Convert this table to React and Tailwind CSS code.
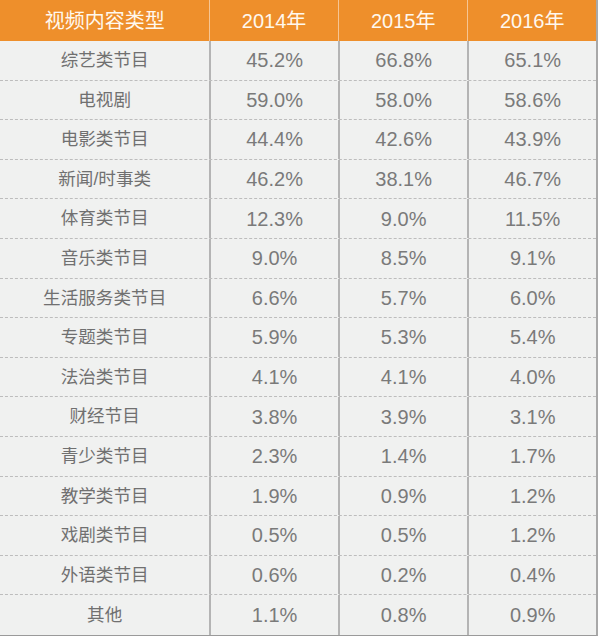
import React from 'react'

const ROWS = [
  ['综艺类节目', '45.2%', '66.8%', '65.1%'],
  ['电视剧', '59.0%', '58.0%', '58.6%'],
  ['电影类节目', '44.4%', '42.6%', '43.9%'],
  ['新闻/时事类', '46.2%', '38.1%', '46.7%'],
  ['体育类节目', '12.3%', '9.0%', '11.5%'],
  ['音乐类节目', '9.0%', '8.5%', '9.1%'],
  ['生活服务类节目', '6.6%', '5.7%', '6.0%'],
  ['专题类节目', '5.9%', '5.3%', '5.4%'],
  ['法治类节目', '4.1%', '4.1%', '4.0%'],
  ['财经节目', '3.8%', '3.9%', '3.1%'],
  ['青少类节目', '2.3%', '1.4%', '1.7%'],
  ['教学类节目', '1.9%', '0.9%', '1.2%'],
  ['戏剧类节目', '0.5%', '0.5%', '1.2%'],
  ['外语类节目', '0.6%', '0.2%', '0.4%'],
  ['其他', '1.1%', '0.8%', '0.9%'],
]

const HEAD = ['视频内容类型', '2014年', '2015年', '2016年']
const WIDTHS = ['w-[210px]', 'w-[129px]', 'w-[130px]', 'w-[129px]']

export default function App() {
  return (
    <div className="w-[600px] h-[636px] bg-white font-['Liberation_Sans','Noto_Sans_CJK_SC',sans-serif]">
      <div className="w-[598px] bg-[#f0f1f0] border-b border-[#9a9a9a] border-r-2 border-r-[#a8a8a8]">
        {/* header */}
        <div className="flex h-[41px] bg-[#ee8f2b] text-[#fff8ee] text-[20px]">
          {HEAD.map((h, i) => (
            <div
              key={h}
              className={`${WIDTHS[i]} flex items-center justify-center ${i > 0 ? 'border-l border-[#f6c593]' : ''}`}
            >
              {h}
            </div>
          ))}
        </div>

        {/* body */}
        {ROWS.map((r, ri) => (
          <div
            key={r[0]}
            className={`flex h-[39.6px] ${ri < ROWS.length - 1 ? 'border-b border-dashed border-[#bdbdbd]' : ''}`}
          >
            {r.map((c, i) => (
              <div
                key={i}
                className={`${WIDTHS[i]} flex items-center justify-center ${i > 0 ? 'border-l-2 border-[#b4b4b4] text-[20px] text-[#7a7a7a]' : 'text-[17.6px] text-[#707070]'}`}
              >
                {c}
              </div>
            ))}
          </div>
        ))}
      </div>
    </div>
  )
}
